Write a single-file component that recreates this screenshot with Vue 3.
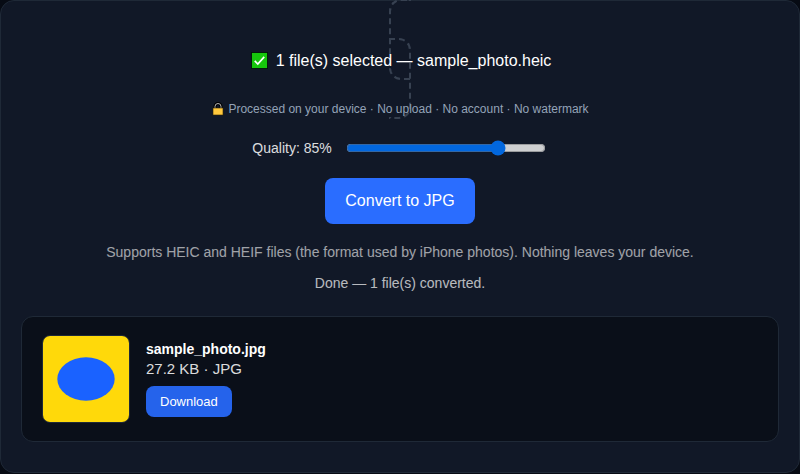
<template>
  <main class="converter">
    <div class="drop-area">
      <label class="drop-label" for="heic-file">
        <span class="selected-file">
          <svg class="check-icon" viewBox="0 0 18 18" aria-hidden="true">
            <rect width="18" height="18" fill="#02130a" />
            <rect x="1" y="1" width="16" height="16" fill="#16c60c" />
            <path d="M4 9.5 7.2 12.7 14 5.2" fill="none" stroke="#fff" stroke-width="1.8" />
          </svg>
          {{ files.length }} file(s) selected — {{ files[0].source }}
        </span>
      </label>
      <input id="heic-file" class="file-input" type="file" accept=".heic,.heif" multiple />
    </div>

    <p class="privacy">
      <svg class="lock-icon" viewBox="0 0 12 14" aria-hidden="true">
        <path d="M3 7V4.5a3 3 0 0 1 6 0V7" fill="none" stroke="#000" stroke-width="3" />
        <path d="M3 7V4.5a3 3 0 0 1 6 0V7" fill="none" stroke="#b5b5b5" stroke-width="1" />
        <rect x="1" y="6" width="10" height="7" fill="#ffc83d" stroke="#332600" stroke-width="0.6" />
      </svg>
      Processed on your device · No upload · No account · No watermark
    </p>

    <div class="quality">
      <label for="quality">Quality: {{ quality }}%</label>
      <input id="quality" v-model.number="quality" class="quality-range" type="range" min="30" max="100" />
    </div>

    <button type="button" class="convert-btn">Convert to JPG</button>

    <p class="hint">Supports HEIC and HEIF files (the format used by iPhone photos). Nothing leaves your device.</p>
    <p class="status" role="status">Done — {{ files.length }} file(s) converted.</p>

    <ul class="results">
      <li v-for="file in files" :key="file.name" class="result">
        <svg class="preview" viewBox="0 0 86 86" role="img" :aria-label="file.name">
          <rect width="86" height="86" fill="#ffd90a" />
          <ellipse cx="43" cy="43" rx="28.7" ry="21.7" fill="#1a62ff" />
        </svg>
        <div class="result-info">
          <strong class="result-name">{{ file.name }}</strong>
          <span class="result-meta">{{ file.size }} · JPG</span>
          <a class="download-btn" href="#" :download="file.name">Download</a>
        </div>
      </li>
    </ul>
  </main>
</template>

<script setup>
import { ref } from 'vue'

const quality = ref(85)

const files = ref([
  { source: 'sample_photo.heic', name: 'sample_photo.jpg', size: '27.2 KB' }
])
</script>

<style>
body {
  margin: 0;
  background: #070b14;
}
</style>

<style scoped>
.converter {
  box-sizing: border-box;
  padding: 29px 20px 30px;
  border: 1px solid #1f2937;
  border-radius: 14px;
  background: #111827;
  color: #fff;
  font-family: "Liberation Sans", Arial, sans-serif;
  font-size: 16px;
  line-height: 20px;
  text-align: center;
}

/* The label stays inline, so its dashed border breaks around the file name */
.drop-label {
  padding: 30px 20px;
  border: 2px dashed #374151;
  border-radius: 12px;
  cursor: pointer;
}

.selected-file {
  display: flex;
  align-items: center;
  justify-content: center;
  gap: 8px;
  position: relative;
  padding: 2px 0 0 2px;
  line-height: 17px;
}

.check-icon {
  width: 17px;
  height: 17px;
}

.file-input {
  display: none;
}

.privacy {
  display: flex;
  align-items: center;
  justify-content: center;
  gap: 4px;
  margin: 10px 0 0;
  padding-left: 1px;
  color: #94a3b8;
  font-size: 12px;
}

.lock-icon {
  width: 12px;
  height: 14px;
}

.quality {
  display: flex;
  align-items: center;
  justify-content: center;
  gap: 12px;
  margin-top: 19px;
  font-size: 14px;
  opacity: 0.85;
}

.quality-range {
  width: 200px;
  margin: 2px;
}

.convert-btn {
  margin-top: 20px;
  padding: 13px 20px;
  border: 0;
  border-radius: 8px;
  background: #2a6dff;
  color: #fff;
  font: inherit;
  cursor: pointer;
}

.hint {
  margin: 18px 0 0;
  font-size: 14px;
  opacity: 0.6;
}

.status {
  margin: 11px 0 0;
  font-size: 14px;
  opacity: 0.7;
}

.results {
  margin: 23px 0 0;
  padding: 0;
  list-style: none;
}

.result {
  display: flex;
  align-items: center;
  gap: 16px;
  padding: 18px 20px;
  border: 1px solid #1f2937;
  border-radius: 12px;
  background: #0a0f19;
  text-align: left;
}

.preview {
  width: 86px;
  height: 86px;
  border: 1px solid #1f2937;
  border-radius: 8px;
}

.result-info {
  display: flex;
  flex-direction: column;
  align-items: flex-start;
  padding-bottom: 2px;
}

.result-name {
  font-size: 14px;
}

.result-meta {
  font-size: 15px;
  opacity: 0.85;
}

.download-btn {
  margin-top: 7px;
  padding: 6px 14px;
  border-radius: 8px;
  background: #2563eb;
  color: #fff;
  font-size: 13px;
  line-height: 19px;
  text-decoration: none;
}
</style>
